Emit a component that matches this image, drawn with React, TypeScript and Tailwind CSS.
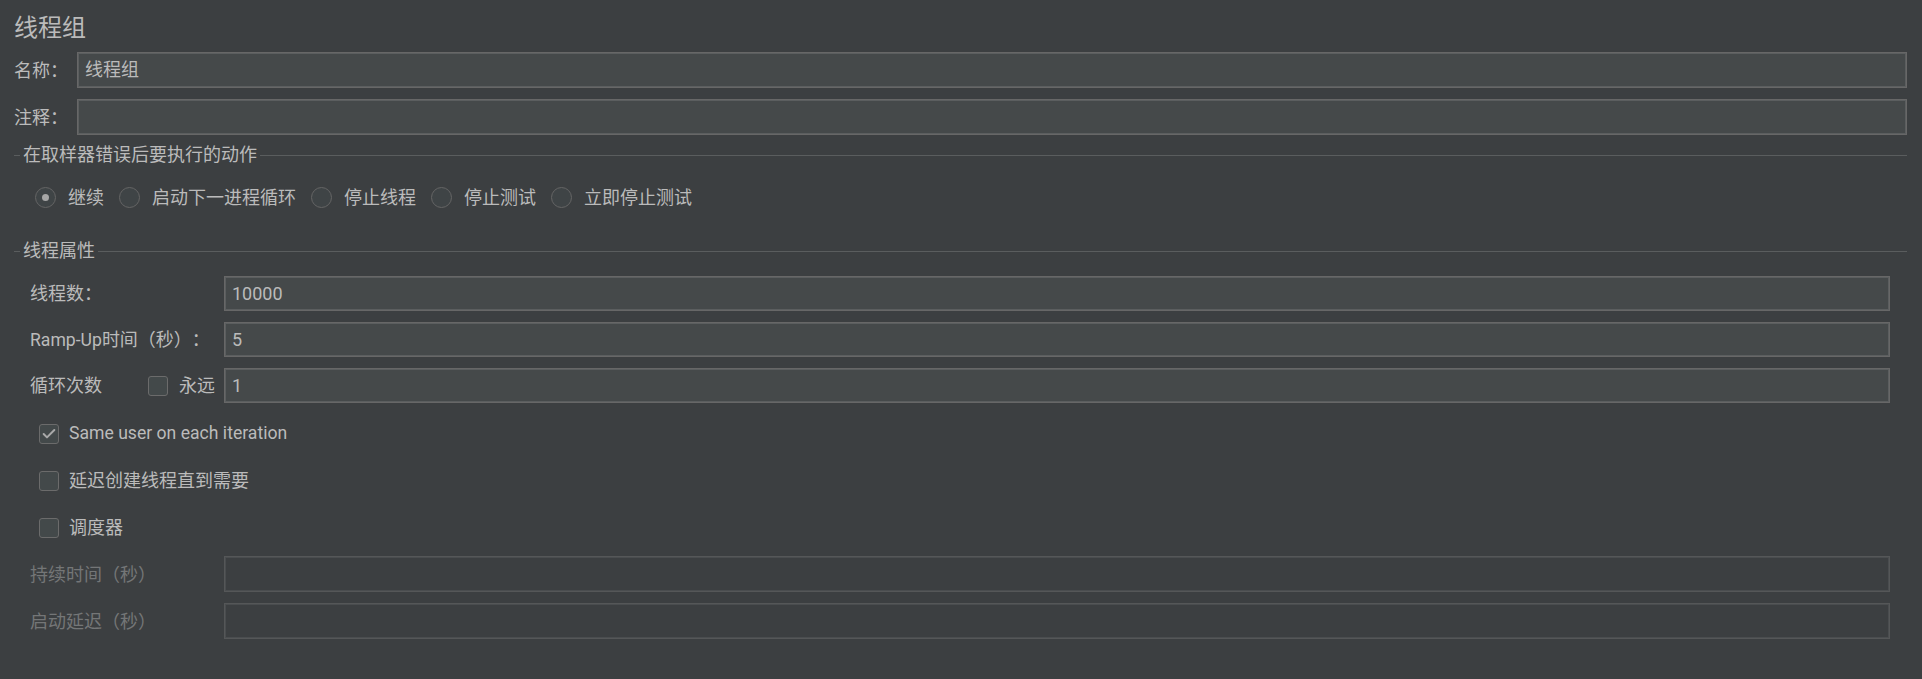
import { Check } from 'lucide-react';

const FONT = 'font-["Roboto","Noto_Sans_CJK_SC",sans-serif]';

function TextField({ value = '', disabled = false }: { value?: string; disabled?: boolean }) {
    return (
        <div
            className={
                disabled
                    ? 'flex-1 h-full flex items-center pl-[7px] bg-[#3c3f41] border border-[#555758] shadow-[inset_0_0_0_1px_#4a4d4f]'
                    : 'flex-1 h-full flex items-center pl-[7px] bg-[#45494a] border border-[#676767] shadow-[inset_0_0_0_1px_#5b5e5f]'
            }
        >
            <span className="leading-none text-[#bbbbbb]">{value}</span>
        </div>
    );
}

function CheckBox({ checked = false }: { checked?: boolean }) {
    return (
        <div className="w-[20px] h-[20px] flex-shrink-0 rounded-[3px] border border-[#6b6b6b] bg-[#43494a] flex items-center justify-center">
            {checked && <Check className="w-[16px] h-[16px] text-[#a9a9a9]" strokeWidth={3} />}
        </div>
    );
}

function Radio({ selected = false }: { selected?: boolean }) {
    return (
        <div className="w-[21px] h-[21px] flex-shrink-0 rounded-full border border-[#656565] bg-[#3f4446] flex items-center justify-center">
            {selected && <div className="w-[7px] h-[7px] rounded-full bg-[#a6a6a6]" />}
        </div>
    );
}

function SectionHeader({ title }: { title: string }) {
    return (
        <div className="flex items-center h-[18px]">
            <div className="ml-px w-[6px] h-px bg-[#5a5d5e]" />
            <span className="px-[3px] leading-[18px]">{title}</span>
            <div className="flex-1 h-px bg-[#5a5d5e]" />
        </div>
    );
}

const ACTIONS = ['继续', '启动下一进程循环', '停止线程', '停止测试', '立即停止测试'];

export default function App() {
    return (
        <div className={`min-h-screen w-full bg-[#3c3f41] text-[#bbbbbb] text-[18px] ${FONT} [text-spacing-trim:space-all] pl-[13px] pr-[15px] pt-[16px]`}>
            <h1 className="text-[24px] leading-[24px] h-[24px] pl-px">线程组</h1>

            <div className="mt-[12px] flex items-center h-[36px]">
                <span className="w-[64px] pl-px">名称：</span>
                <TextField value="线程组" />
            </div>
            <div className="mt-[11px] flex items-center h-[36px]">
                <span className="w-[64px] pl-px">注释：</span>
                <TextField />
            </div>

            <div className="mt-[11px]">
                <SectionHeader title="在取样器错误后要执行的动作" />
                <div className="mt-[23px] flex items-center h-[21px] pl-[22px] gap-[15px]">
                    {ACTIONS.map((label, i) => (
                        <div key={label} className="flex items-center gap-[12px]">
                            <Radio selected={i === 0} />
                            <span className="leading-none">{label}</span>
                        </div>
                    ))}
                </div>
            </div>

            <div className="mt-[34px]">
                <SectionHeader title="线程属性" />
                <div className="mt-[16px] px-[17px] flex flex-col gap-[11px]">
                    <div className="flex items-center h-[35px]">
                        <span className="w-[194px]">线程数：</span>
                        <TextField value="10000" />
                    </div>
                    <div className="flex items-center h-[35px]">
                        <span className="w-[194px]"><span className="text-[17.6px]">Ramp-Up</span>时间（秒）：</span>
                        <TextField value="5" />
                    </div>
                    <div className="flex items-center h-[35px]">
                        <span className="w-[118px]">循环次数</span>
                        <CheckBox />
                        <span className="ml-[11px] w-[45px]">永远</span>
                        <TextField value="1" />
                    </div>
                </div>

                <div className="mt-[21px] pl-[26px] flex flex-col gap-[27px]">
                    <div className="flex items-center h-[20px] gap-[10px]">
                        <CheckBox checked />
                        <span className="leading-none text-[17.6px]">Same user on each iteration</span>
                    </div>
                    <div className="flex items-center h-[20px] gap-[10px]">
                        <CheckBox />
                        <span className="leading-none">延迟创建线程直到需要</span>
                    </div>
                    <div className="flex items-center h-[20px] gap-[10px]">
                        <CheckBox />
                        <span className="leading-none">调度器</span>
                    </div>
                </div>

                <div className="mt-[18px] px-[17px] flex flex-col gap-[11px] text-[#747677]">
                    <div className="flex items-center h-[36px]">
                        <span className="w-[194px]">持续时间（秒）</span>
                        <TextField disabled />
                    </div>
                    <div className="flex items-center h-[36px]">
                        <span className="w-[194px]">启动延迟（秒）</span>
                        <TextField disabled />
                    </div>
                </div>
            </div>
        </div>
    );
}
